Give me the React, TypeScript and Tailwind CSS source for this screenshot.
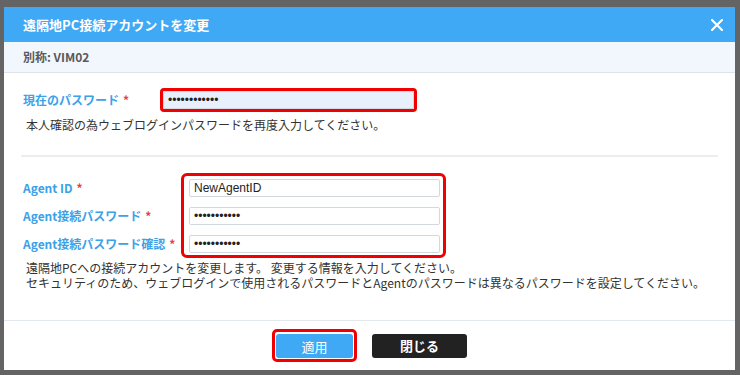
import React from 'react';

const jp = { fontFamily: '"Noto Sans CJK JP", sans-serif' };

const Field = ({ value, bg = 'bg-white' }: { value: string; bg?: string }) => (
  <input
    readOnly
    value={value}
    className={`block w-full h-[18px] ${bg} border border-[#d3d8e0] rounded-[2px] px-[4px] text-[12px] text-[#222] outline-none font-['Liberation_Sans',sans-serif]`}
  />
);

const Req = () => <span className="text-[#e8413b] ml-[4px]">*</span>;

export default function App() {
  return (
    <div className="w-[740px] h-[375px] bg-[#646464] pt-[7px] pl-[4px] pr-[5px] pb-[5px]" style={jp}>
      <div className="h-full bg-white flex flex-col">
        {/* title bar */}
        <div className="h-[35px] shrink-0 bg-[#3fa9f5] flex items-center justify-between pl-[19px] pr-[12px]">
          <h1 className="text-[13px] font-bold text-white leading-none">遠隔地PC接続アカウントを変更</h1>
          <svg width="12" height="12" viewBox="0 0 12 12" className="text-white">
            <path d="M1 1L11 11M11 1L1 11" stroke="currentColor" strokeWidth="2.2" strokeLinecap="round" />
          </svg>
        </div>

        <div className="h-[31px] shrink-0 bg-[#f2f6fd] border-b border-[#dfe4ec] flex items-center pl-[19px]">
          <span className="text-[12px] font-bold text-[#5a5a5a]">別称: VIM02</span>
        </div>

        <div className="flex-1 px-[17px] pt-[15px]">
          {/* current password */}
          <div className="flex items-center pl-[2px]">
            <label className="w-[137px] text-[12px] font-bold text-[#3aa2e9] leading-[18px]">
              現在のパスワード<Req />
            </label>
            <div className="w-[257px] border-[3px] border-[#f00000] rounded-[4px]">
              <Field value="••••••••••••" bg="bg-[#e8f0fe]" />
            </div>
          </div>
          <p className="mt-[5px] pl-[5px] text-[12px] leading-[15px] text-[#333]">
            本人確認の為ウェブログインパスワードを再度入力してください。
          </p>

          <div className="mt-[23px] h-[2px] bg-[#ececf1]" />

          {/* agent account */}
          <div className="mt-[16px] flex pl-[2px]">
            <div className="w-[158px] pt-[6px] flex flex-col gap-[10px] text-[12px] font-bold text-[#3aa2e9]">
              <label className="h-[18px] leading-[18px]">Agent ID<Req /></label>
              <label className="h-[18px] leading-[18px]">Agent接続パスワード<Req /></label>
              <label className="h-[18px] leading-[18px]">Agent接続パスワード確認<Req /></label>
            </div>
            <div className="w-[265px] border-[3px] border-[#f00000] rounded-[6px] pl-[5px] pr-[3px] pt-[3px] pb-[2px] flex flex-col gap-[10px]">
              <Field value="NewAgentID" />
              <Field value="•••••••••••" />
              <Field value="•••••••••••" />
            </div>
          </div>
          <div className="mt-[2px] pl-[5px] text-[12px] leading-[15px] text-[#333]">
            <p>遠隔地PCへの接続アカウントを変更します。 変更する情報を入力してください。</p>
            <p>セキュリティのため、ウェブログインで使用されるパスワードとAgentのパスワードは異なるパスワードを設定してください。</p>
          </div>
        </div>

        {/* footer */}
        <div className="h-[50px] shrink-0 border-t border-[#e3e7ee] flex items-center justify-center gap-[15px]">
          <div className="border-[3px] border-[#f00000] rounded-[5px] p-[1px]">
            <button className="w-[77px] h-[24px] bg-[#3fa9f5] rounded-[3px] text-white text-[13px]">適用</button>
          </div>
          <button className="w-[95px] h-[24px] bg-[#222] rounded-[3px] text-white text-[13px] font-bold">閉じる</button>
        </div>
      </div>
    </div>
  );
}
